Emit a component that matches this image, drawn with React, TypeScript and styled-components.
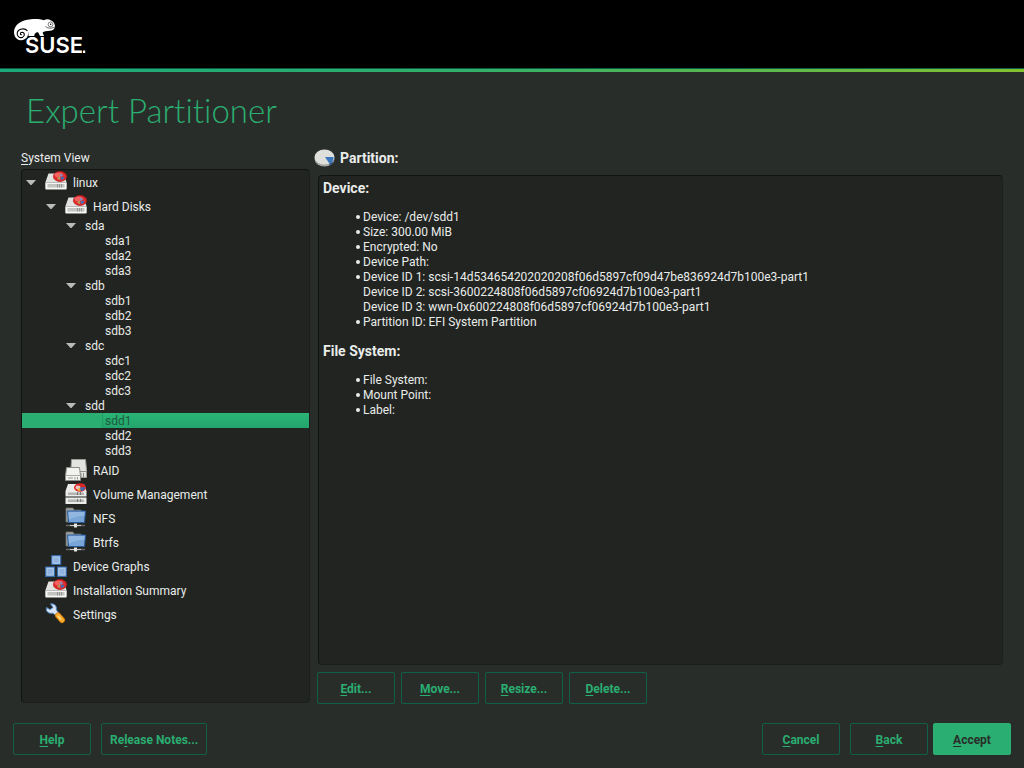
import React from 'react';
import styled, { createGlobalStyle } from 'styled-components';

const GlobalStyle = createGlobalStyle`
  * { box-sizing: border-box; }
  body {
    margin: 0;
    background: #292d2a;
    color: #e9ecea;
    font: 12px/15px Roboto, "Liberation Sans", sans-serif;
  }
  u {
    text-decoration-thickness: 1px;
    text-underline-offset: 2px;
    text-decoration-skip-ink: none;
  }
`;

const Page = styled.div`
  display: flex;
  flex-direction: column;
  min-height: 100vh;
`;

const Header = styled.header`
  height: 68px;
  padding: 16px 12px 0;
  background: #000;
`;

const Stripe = styled.div`
  height: 4px;
  border-top: 1px solid #0b5d44;
  background: linear-gradient(90deg, #1ba97b 0%, #30b06c 45%, #84c12f 100%);
`;

const Title = styled.h1`
  margin: 0;
  padding: 16px 26px 0;
  font: 300 33px/44px Lato, "Open Sans", sans-serif;
  font-variant-ligatures: none;
  color: #2aae71;
`;

const Main = styled.main`
  flex: 1;
  display: grid;
  grid-template-columns: minmax(0, 289fr) minmax(0, 685fr);
  column-gap: 8px;
  padding: 18px 21px 0;
`;

const Column = styled.section`
  display: flex;
  flex-direction: column;
`;

const TreeLabel = styled.div`
  line-height: 15px;
  padding: 1px 0 3px;
`;

const Panel = styled.div`
  flex: 1;
  background: #212421;
  border: 1px solid #1c1f1d;
  border-top-color: #111412;
  border-left-color: #111412;
  border-radius: 4px;
`;

const TreeList = styled.ul`
  margin: 0;
  padding: 0;
  list-style: none;
`;

const TreeRow = styled.li<{ $depth: number; $tall: boolean; $selected: boolean }>`
  display: flex;
  align-items: center;
  height: ${(p) => (p.$tall ? 24 : 15)}px;
  padding-left: ${(p) => p.$depth * 20}px;
  background: ${(p) => (p.$selected ? '#2aae71' : 'transparent')};
  color: ${(p) => (p.$selected ? '#1f5a3f' : 'inherit')};
`;

const Toggle = styled.span`
  display: flex;
  flex: none;
  width: 20px;
  padding-left: 4px;
`;

const IconSlot = styled.span`
  display: flex;
  flex: none;
  width: 28px;
  padding-left: 3px;
`;

const RowText = styled.span<{ $selected: boolean }>`
  flex: 1;
  padding: 2px 0 0 2px;
  line-height: 13px;
  border-left: 1px solid ${(p) => (p.$selected ? '#239a62' : 'transparent')};
  background: ${(p) => (p.$selected ? 'linear-gradient(#2bb475, #22a56d)' : 'none')};
`;

const PartitionHeading = styled.h2`
  display: flex;
  align-items: center;
  gap: 5px;
  height: 20px;
  margin: -2px 0 7px -4px;
  font-size: 14px;
  font-weight: 700;
`;

const Details = styled(Panel)`
  padding: 4px;
`;

const DetailHeading = styled.h3`
  margin: 0;
  font-size: 14px;
  line-height: 17px;
  font-weight: 700;
`;

const DetailList = styled.ul`
  margin: 13px 0;
  padding: 0 0 0 33px;
  list-style: none;
`;

const DetailItem = styled.li`
  display: flex;
`;

const Bullet = styled.span`
  width: 7px;
  flex: none;
  &::before {
    content: "";
    display: block;
    width: 4px;
    height: 4px;
    margin-top: 5px;
    border-radius: 2px;
    background: #e9ecea;
  }
`;

const Actions = styled.div`
  display: flex;
  gap: 6px;
  margin: 7px 0 -1px -1px;
`;

const Footer = styled.footer`
  display: flex;
  gap: 10px;
  padding: 20px 13px 13px;
`;

const Spacer = styled.div`
  flex: 1;
`;

const PushButton = styled.button<{ $primary?: boolean }>`
  height: 32px;
  min-width: 78px;
  padding: 2px 8px 0;
  border: 1px solid ${(p) => (p.$primary ? '#2aae71' : '#106049')};
  border-radius: 2px;
  background: ${(p) => (p.$primary ? '#2aae71' : 'transparent')};
  color: ${(p) => (p.$primary ? '#292d2a' : '#2aae71')};
  font: 700 12px/15px Roboto, "Liberation Sans", sans-serif;
  margin-left: ${(p) => (p.$primary ? '-5px' : '0')};
`;

const Logo = () => (
  <svg width="80" height="48" viewBox="12 16 80 48" role="img" aria-label="SUSE">
    <path
      fill="#fff"
      d="M14 32C14 25 21 19.600 31 19.200C37 18.800 41 19.400 44 20.200C46 19 49 19 51 20.400C54 21.400 55.200 24.500 54.800 26.500C54.500 29.500 52.500 30.800 50 30.800C46.500 31 44 31.400 42.600 32.400L44 36H40L38.300 32.400C36 32 34.600 33.300 34.200 36H28.500C28.500 34 28.500 33 28 32C28.800 37 25 40.600 20.500 40.200C16.500 39.800 14 36.500 14 32Z"
    />
    <path
      d="M27.500 31C25 27.600 18.500 28.400 17.300 32.400C16.500 36 19.500 38.400 22.400 37.400C25.200 36.200 24.800 32.200 22 32.200C19.800 32.400 20 35 21.800 34.800"
      fill="none"
      stroke="#000"
      strokeWidth="1.100"
    />
    <circle cx="50.500" cy="24.400" r="2.400" fill="none" stroke="#000" strokeWidth="0.500" />
    <circle cx="50.700" cy="24.200" r="0.700" fill="#000" />
    <path d="M45.500 26.500C48 28.600 51 28.700 54 27.300" fill="none" stroke="#000" strokeWidth="0.600" />
    <text x="25" y="53" fill="#fff" fontFamily="Inter, sans-serif" fontWeight="600" fontSize="22">
      SUSE
    </text>
    <rect x="83" y="50.500" width="2.200" height="2.500" fill="#fff" />
  </svg>
);

const Arrow = () => (
  <svg width="10" height="5" viewBox="0 0 10 5" aria-hidden="true">
    <path d="M0 0H10L5.500 5H4.500Z" fill="#b9bcba" />
  </svg>
);

const DiskIcon = () => (
  <svg width="22" height="22" viewBox="0 0 22 22" aria-hidden="true">
    <path d="M3.500 2.500H18.500L21.700 11.500H0.300Z" fill="#e2e2e0" />
    <path d="M0.300 11.500H21.700V17.500Q21.700 18.500 20.700 18.500H1.300Q0.300 18.500 0.300 17.500Z" fill="#f6f6f4" />
    <path d="M2.500 13H19.500V16.500H2.500Z" fill="#c3c5c1" />
    <path d="M12.500 13V16.500M14.500 13V16.500M16.500 13V16.500" stroke="#8a8a8a" strokeWidth="0.800" />
    <ellipse cx="15" cy="5.500" rx="6.600" ry="5" fill="#e02c2c" stroke="#b81313" strokeWidth="0.700" />
    <ellipse cx="13.500" cy="4" rx="4" ry="2.400" fill="#ff8585" opacity=".6" />
    <path d="M15.500 5.500L19.500 6Q19 8.800 16 9.200Z" fill="#496cb0" />
    <path d="M15 5.500V9Q12.500 8.500 12 7Z" fill="#b59a5a" />
    <path d="M15 2.500V5.500L18.500 4.500Q17.500 3 15 2.500Z" fill="#8e85b8" />
  </svg>
);

const RaidIcon = () => (
  <svg width="22" height="22" viewBox="0 0 22 22" aria-hidden="true">
    <path d="M6.500 0.500H20.500L21.500 11V18.500H10V9H6Z" fill="#e3e4e0" stroke="#9a9c97" />
    <path d="M7 12.500H21M16 14V18M18.500 14V18" stroke="#8d8f8a" />
    <path d="M1.500 8.500H14.500L15.500 17V21.500H0.500V17Z" fill="#f2f2ef" stroke="#8a8c87" />
    <path d="M0.500 16.500H15.500" stroke="#aaa" />
    <path d="M3 19H8M10 18V20.500M12.500 18V20.500" stroke="#999" />
  </svg>
);

const VolumeIcon = () => (
  <svg width="22" height="22" viewBox="0 0 22 22" aria-hidden="true">
    <path d="M3 1H19L21.500 8V13.500H0.500V8Z" fill="#ececea" />
    <path d="M0.500 14.500H21.500V21H0.500Z" fill="#ececea" />
    <path d="M3 9.500H19V12H3ZM3 16.500H19V19H3Z" fill="#b2b4b0" />
    <path d="M12.500 9V12M15.500 9V12M12.500 16V19M15.500 16V19" stroke="#777" />
    <ellipse cx="15" cy="4.500" rx="6" ry="4.300" fill="#dd2626" />
    <ellipse cx="13" cy="4.500" rx="2.500" ry="2" fill="#eee" opacity=".8" />
    <path d="M15 4.500L20 4Q20 8 15.500 8Z" fill="#3e6db5" />
    <path d="M15 4.500L15.500 8Q12.500 8 12 6.500Z" fill="#e8b23a" />
  </svg>
);

const FolderIcon = () => (
  <svg width="22" height="22" viewBox="0 0 22 22" aria-hidden="true">
    <path d="M1 1H8L9 3H16V6H4L3 15H1Z" fill="#9d9f9b" stroke="#747672" strokeWidth="0.700" />
    <path d="M2.500 4H20.500L19.500 15.500H3.500Z" fill="#78a4d6" stroke="#265a99" />
    <path d="M3.500 5H19.500L19 9Q9 9 4 13Z" fill="#91b7e1" />
    <path d="M1 18.500H20" stroke="#666" strokeWidth="1.500" />
    <path d="M5 18.500H16" stroke="#ccc" />
    <path d="M9 16.500H12V20.500H9Z" fill="#e5e5e3" />
  </svg>
);

const GraphIcon = () => (
  <svg width="22" height="22" viewBox="0 0 22 22" aria-hidden="true">
    <g fill="#8fb3de" stroke="#3869aa" strokeWidth="1.200">
      <path d="M6.700 0.700H15.700V9.500H6.700ZM0.700 12H9.500V21.300H0.700ZM12.500 12H21.300V21.300H12.500Z" />
    </g>
    <g fill="none" stroke="#c0d5ee" strokeWidth="0.700">
      <path d="M8 2H14.400V8.200H8ZM2 13.300H8.200V20H2ZM13.800 13.300H20V20H13.800Z" />
    </g>
  </svg>
);

const SettingsIcon = () => (
  <svg width="22" height="22" viewBox="0 0 22 22" aria-hidden="true">
    <path
      d="M5.500 0.800L8 4.500L5 6.500L1.500 4.500Q0.500 8.500 4 10Q6 10.700 8 10.200L12 14L14.500 11L11.500 7Q12 3.500 9.500 1.500Q7.500 0.500 5.500 0.800Z"
      fill="#d7e4f4"
      stroke="#4e7fbd"
    />
    <path d="M13 12.500L17 17" stroke="#c87408" strokeWidth="6" strokeLinecap="round" />
    <path d="M13 12.500L17 17" stroke="#fbad32" strokeWidth="4.500" strokeLinecap="round" />
    <path d="M13 13L16 16.500" stroke="#ffe092" strokeWidth="1.200" />
  </svg>
);

const PieIcon = () => (
  <svg width="21" height="18" viewBox="0 0 21 18" aria-hidden="true">
    <ellipse cx="10.500" cy="10" rx="10" ry="7.500" fill="#a5a7a2" />
    <ellipse cx="10.500" cy="8" rx="10" ry="7.500" fill="#dfe0dc" />
    <path d="M11 8H19.500Q19.500 12.500 15.500 14.700Z" fill="#3c76bd" />
    <path d="M15.500 14.700Q19.500 13 19.500 9V11Q19 15 15.500 16.500Z" fill="#204a87" />
  </svg>
);

type Node = {
  label: string;
  depth: number;
  open?: boolean;
  icon?: React.ReactNode;
  selected?: boolean;
};

const disk = (name: string, selected?: string): Node[] => [
  { label: name, depth: 2, open: true },
  ...[1, 2, 3].map((n) => ({ label: name + n, depth: 3, selected: selected === name + n })),
];

const nodes: Node[] = [
  { label: 'linux', depth: 0, open: true, icon: <DiskIcon /> },
  { label: 'Hard Disks', depth: 1, open: true, icon: <DiskIcon /> },
  ...disk('sda'),
  ...disk('sdb'),
  ...disk('sdc'),
  ...disk('sdd', 'sdd1'),
  { label: 'RAID', depth: 1, icon: <RaidIcon /> },
  { label: 'Volume Management', depth: 1, icon: <VolumeIcon /> },
  { label: 'NFS', depth: 1, icon: <FolderIcon /> },
  { label: 'Btrfs', depth: 1, icon: <FolderIcon /> },
  { label: 'Device Graphs', depth: 0, icon: <GraphIcon /> },
  { label: 'Installation Summary', depth: 0, icon: <DiskIcon /> },
  { label: 'Settings', depth: 0, icon: <SettingsIcon /> },
];

const deviceLines = [
  { text: 'Device: /dev/sdd1' },
  { text: 'Size: 300.00 MiB' },
  { text: 'Encrypted: No' },
  { text: 'Device Path:' },
  {
    text: 'Device ID 1: scsi-14d534654202020208f06d5897cf09d47be836924d7b100e3-part1',
    more: [
      'Device ID 2: scsi-3600224808f06d5897cf06924d7b100e3-part1',
      'Device ID 3: wwn-0x600224808f06d5897cf06924d7b100e3-part1',
    ],
  },
  { text: 'Partition ID: EFI System Partition' },
];

const fileSystemLines = [{ text: 'File System:' }, { text: 'Mount Point:' }, { text: 'Label:' }];

const Lines = ({ items }: { items: { text: string; more?: string[] }[] }) => (
  <DetailList>
    {items.map((item) => (
      <DetailItem key={item.text}>
        <Bullet />
        <div>
          {item.text}
          {item.more?.map((line) => <div key={line}>{line}</div>)}
        </div>
      </DetailItem>
    ))}
  </DetailList>
);

const Key = ({ text, at = 0 }: { text: string; at?: number }) => (
  <>
    {text.slice(0, at)}
    <u>{text[at]}</u>
    {text.slice(at + 1)}
  </>
);

export default function App() {
  return (
    <Page>
      <GlobalStyle />
      <Header>
        <Logo />
      </Header>
      <Stripe />
      <Title>Expert Partitioner</Title>
      <Main>
        <Column>
          <TreeLabel id="system-view">
            <Key text="System View" />
          </TreeLabel>
          <Panel>
            <TreeList role="tree" aria-labelledby="system-view">
              {nodes.map((n) => (
                <TreeRow
                  key={n.label}
                  role="treeitem"
                  aria-level={n.depth + 1}
                  aria-expanded={n.open}
                  aria-selected={!!n.selected}
                  $depth={n.depth}
                  $tall={!!n.icon}
                  $selected={!!n.selected}
                >
                  <Toggle>{n.open && <Arrow />}</Toggle>
                  {n.icon && <IconSlot>{n.icon}</IconSlot>}
                  <RowText $selected={!!n.selected}>{n.label}</RowText>
                </TreeRow>
              ))}
            </TreeList>
          </Panel>
        </Column>
        <Column>
          <PartitionHeading>
            <PieIcon />
            Partition:
          </PartitionHeading>
          <Details>
            <DetailHeading>Device:</DetailHeading>
            <Lines items={deviceLines} />
            <DetailHeading>File System:</DetailHeading>
            <Lines items={fileSystemLines} />
          </Details>
          <Actions>
            {['Edit...', 'Move...', 'Resize...', 'Delete...'].map((label) => (
              <PushButton key={label} type="button">
                <Key text={label} />
              </PushButton>
            ))}
          </Actions>
        </Column>
      </Main>
      <Footer>
        <PushButton type="button">
          <Key text="Help" />
        </PushButton>
        <PushButton type="button">
          <Key text="Release Notes..." at={2} />
        </PushButton>
        <Spacer />
        <PushButton type="button">
          <Key text="Cancel" />
        </PushButton>
        <PushButton type="button">
          <Key text="Back" />
        </PushButton>
        <PushButton type="button" $primary>
          <Key text="Accept" />
        </PushButton>
      </Footer>
    </Page>
  );
}
